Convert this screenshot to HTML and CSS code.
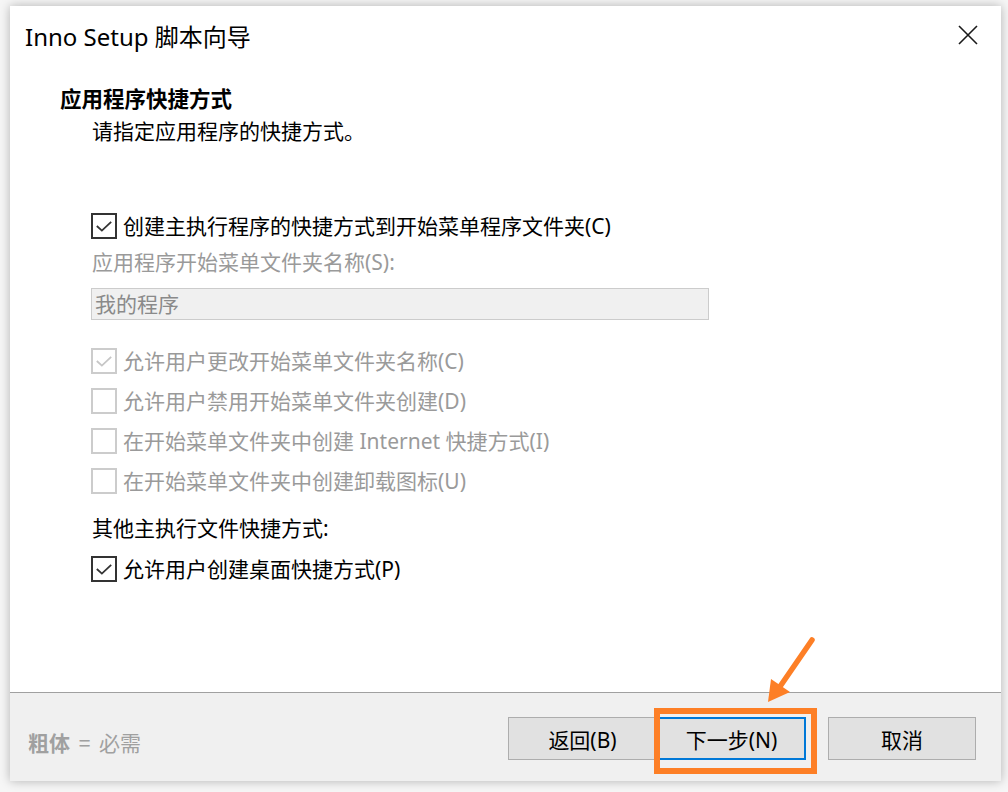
FILE: index.html
```html
<!DOCTYPE html>
<html lang="zh-CN">
<head>
<meta charset="utf-8">
<title>Inno Setup 脚本向导</title>
<link rel="stylesheet" href="styles.css">
</head>
<body>
<div class="window">
  <div class="titlebar">
    <span class="title">Inno Setup 脚本向导</span>
    <svg class="close" width="20" height="20" viewBox="0 0 20 20"><path d="M1 1 L19 19 M19 1 L1 19" stroke="#1a1a1a" stroke-width="1.6" fill="none"/></svg>
  </div>
  <div class="content">
    <div class="heading">应用程序快捷方式</div>
    <div class="subtitle">请指定应用程序的快捷方式。</div>
    <div class="form">
      <div class="row first">
        <span class="cb checked"><svg viewBox="0 0 26 26"><path d="M4.5 13 L10.5 18.5 L21.5 8" /></svg></span>
        <span class="label">创建主执行程序的快捷方式到开始菜单程序文件夹(C)</span>
      </div>
      <div class="field-label">应用程序开始菜单文件夹名称(S):</div>
      <div class="input">我的程序</div>
      <div class="row disabled gap-top">
        <span class="cb checked"><svg viewBox="0 0 26 26"><path d="M4.5 13 L10.5 18.5 L21.5 8" /></svg></span>
        <span class="label">允许用户更改开始菜单文件夹名称(C)</span>
      </div>
      <div class="row disabled">
        <span class="cb"></span>
        <span class="label">允许用户禁用开始菜单文件夹创建(D)</span>
      </div>
      <div class="row disabled">
        <span class="cb"></span>
        <span class="label">在开始菜单文件夹中创建 Internet 快捷方式(I)</span>
      </div>
      <div class="row disabled">
        <span class="cb"></span>
        <span class="label">在开始菜单文件夹中创建卸载图标(U)</span>
      </div>
      <div class="section-label">其他主执行文件快捷方式:</div>
      <div class="row last">
        <span class="cb checked"><svg viewBox="0 0 26 26"><path d="M4.5 13 L10.5 18.5 L21.5 8" /></svg></span>
        <span class="label">允许用户创建桌面快捷方式(P)</span>
      </div>
    </div>
  </div>
  <div class="footer">
    <span class="note"><b class="bold">粗体</b> = 必需</span>
    <div class="buttons">
      <button class="btn">返回(B)</button>
      <button class="btn focused">下一步(N)</button>
      <button class="btn cancel">取消</button>
    </div>
  </div>
</div>
<svg class="overlay" width="1008" height="792" viewBox="0 0 1008 792">
  <rect x="657" y="711" width="157" height="60" fill="none" stroke="#fd7f26" stroke-width="6"/>
  <line x1="812" y1="640" x2="779" y2="688" stroke="#fd7f26" stroke-width="5.5" stroke-linecap="round"/>
  <polygon points="768,702 771,679 790,692" fill="#fd7f26"/>
</svg>
</body>
</html>
```

FILE: styles.css
```css
html, body {
  margin: 0;
  padding: 0;
}
body {
  width: 1008px;
  height: 792px;
  background: #f6f6f6;
  position: relative;
  overflow: hidden;
  font-family: "Noto Sans", "Noto Sans CJK SC", sans-serif;
  color: #000;
}
.window {
  position: absolute;
  left: 10px;
  top: 6px;
  width: 991px;
  height: 775px;
  background: #fff;
  box-shadow: 0 0 10px rgba(0, 0, 0, 0.28);
  display: flex;
  flex-direction: column;
}
.titlebar {
  height: 62px;
  flex: none;
  display: flex;
  align-items: center;
  justify-content: space-between;
  padding: 0 23px 0 15px;
}
.title {
  font-size: 24px;
  line-height: 62px;
  font-family: "Noto Sans", "Noto Sans CJK SC", sans-serif;
}
.close {
  display: block;
  margin-bottom: 4px;
}
.content {
  flex: 1;
  padding: 16px 0 0 50px;
  border-bottom: 1px solid #a0a0a0;
}
.heading {
  font-family: "Noto Sans CJK SC", sans-serif;
  font-weight: 700;
  font-size: 21.5px;
  line-height: 28px;
}
.subtitle {
  margin: 4px 0 0 32px;
  font-family: "Noto Sans CJK SC", sans-serif;
  font-size: 21px;
  line-height: 28px;
}
.form {
  margin-left: 31px;
  font-size: 21px;
}
.row {
  display: flex;
  align-items: center;
  height: 26px;
  margin-top: 14px;
  white-space: nowrap;
}
.row.first {
  margin-top: 69px;
}
.row.gap-top {
  margin-top: 28px;
}
.row.last {
  margin-top: 14px;
}
.cb {
  box-sizing: border-box;
  width: 26px;
  height: 26px;
  border: 2px solid #333;
  margin-right: 6px;
  flex: none;
  display: flex;
}
.cb svg {
  width: 22px;
  height: 22px;
}
.cb path {
  fill: none;
  stroke: #333;
  stroke-width: 2.1;
}
.label {
  line-height: 26px;
}
.disabled .cb {
  border-color: #cccccc;
}
.disabled .cb path {
  stroke: #c6c6c6;
}
.disabled .label {
  color: #9a9a9a;
}
.field-label {
  margin-top: 9px;
  line-height: 28px;
  color: #9a9a9a;
  padding-left: 1px;
}
.input {
  box-sizing: border-box;
  margin-top: 12px;
  width: 618px;
  height: 32px;
  background: #f0f0f0;
  border: 1px solid #cccccc;
  color: #8a8a8a;
  line-height: 30px;
  padding-left: 3px;
}
.section-label {
  margin-top: 20px;
  line-height: 28px;
  padding-left: 1px;
}
.footer {
  height: 88px;
  flex: none;
  background: #f0f0f0;
  display: flex;
  justify-content: space-between;
  padding: 0 25px 0 18px;
}
.note {
  color: #a0a0a0;
  font-size: 21px;
  line-height: 28px;
  margin-top: 35px;
  word-spacing: 4px;
  font-family: "Noto Sans CJK SC", sans-serif;
}
.bold {
  font-weight: 700;
}
.buttons {
  display: flex;
  margin-top: 24px;
}
.btn {
  box-sizing: border-box;
  width: 149px;
  height: 43px;
  background: #e1e1e1;
  border: 1px solid #adadad;
  font-family: "Noto Sans", "Noto Sans CJK SC", sans-serif;
  font-size: 21px;
  color: #000;
  padding: 0;
  margin: 0;
}
.btn.focused {
  border: 2px solid #0078d7;
}
.btn.cancel {
  margin-left: 22px;
  width: 148px;
}
.overlay {
  position: absolute;
  left: 0;
  top: 0;
  pointer-events: none;
}
```
